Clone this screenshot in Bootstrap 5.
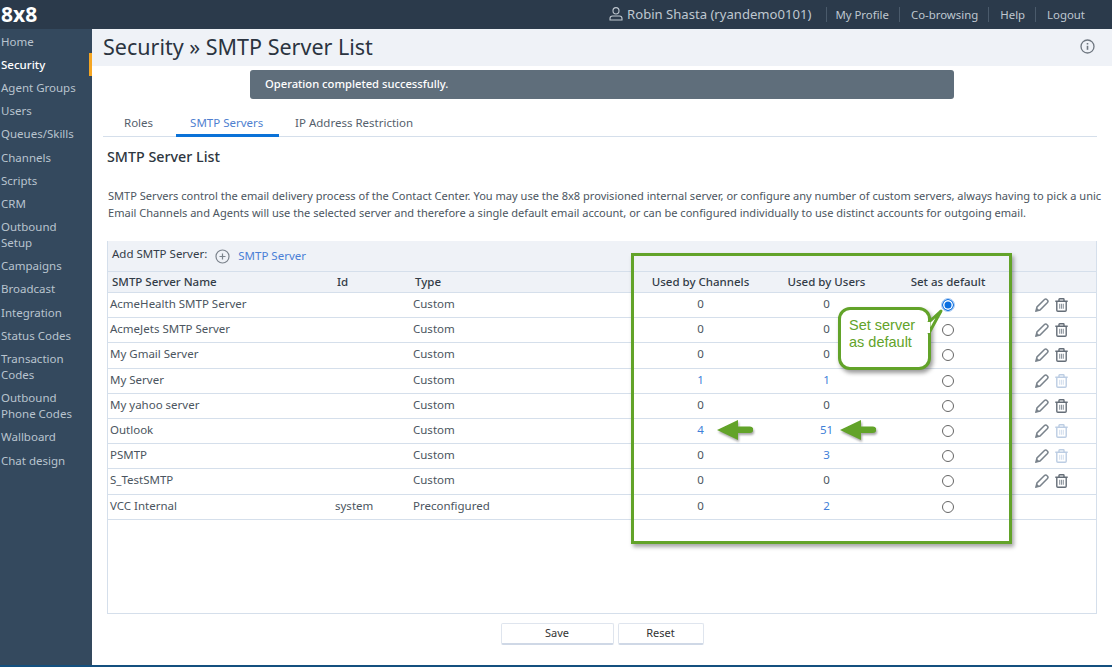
<!DOCTYPE html>
<html lang="en">
<head>
<meta charset="UTF-8" />
<title>SMTP Server List</title>
<link href="https://cdn.jsdelivr.net/npm/bootstrap@5.3.0/dist/css/bootstrap.min.css" rel="stylesheet" />
<style>
  html, body { height: 100%; overflow: hidden; }
  body { font-family: "Noto Sans", sans-serif; font-size: 11.5px; color: #44505c; background: #fff; }
  .top-bar { height: 29px; background: #2b3a4b; color: #c5ccd4; }
  .logo-text { font-weight: 700; font-size: 21px; color: #fff; line-height: 29px; padding-left: 1px; }
  .user-name { font-size: 13.1px; color: #bfc7d0; padding-right: 15px; }
  .top-link { font-size: 11.4px; color: #bfc7d0; text-decoration: none; border-left: 1px solid #4a5a6b; padding: 0 10px 0 11px; line-height: 15px; }
  .top-link.first-link { padding-left: 8px; }
  .top-links { padding-right: 17px; }
  .page-body { height: 636px; }
  .side-nav { width: 92px; background: #34495e; flex: none; padding-top: 1px; }
  .side-nav a { display: block; color: #b9c4cf; text-decoration: none; font-size: 11.5px; line-height: 16px; padding: 3.6px 0 3.6px 1px; border-right: 3px solid transparent; }
  .side-nav a.active-item { color: #fff; font-weight: 500; border-right-color: #f5a623; }
  .bottom-line { height: 2px; background: #14507f; }
  .main-pane { min-width: 0; position: relative; }
  .title-band { height: 37px; background: #eff2f7; padding: 0 17px 2px 11px; }
  .title-band h1 { font-size: 21.5px; font-weight: 400; color: #2b3440; margin: 0; }
  .msg-bar { width: 704px; height: 29px; margin: 4px 0 0 158px; background: #5f6e7b; border-radius: 3px; color: #fff; font-size: 11.2px; font-weight: 500; padding: 0 15px; line-height: 28px; }
  .tab-row { margin: 10px 15px 0 11px; height: 28px; border-bottom: 1px solid #d5dfeb; }
  .tab-row a { color: #55606c; text-decoration: none; font-size: 11.5px; line-height: 27px; padding: 0 14px 0 21px; height: 28px; }
  .tab-row a.tab-on { color: #4f7fd0; border-bottom: 3px solid #0a72d8; padding: 0 0 0 14px; margin-left: 9px; width: 103px; }
  .tab-row a.tab-last { padding-left: 16px; }
  .list-title { font-size: 14.3px; font-weight: 500; color: #2e3640; margin: 10px 0 0 15px; line-height: 20px; }
  .intro-text { margin: 20px 0 0 16px; line-height: 17px; white-space: nowrap; color: #4b5560; font-size: 11.05px; }
  .server-box { margin: 20px 15px 0 15px; height: 373px; border: 1px solid #d5dfeb; border-top: 0; }
  .add-row { height: 30px; background: #eff2f7; padding: 0 4px; color: #333c47; }
  .add-label { margin-right: 8px; padding-bottom: 4px; }
  .add-link { color: #4a7fd6; text-decoration: none; }
  .server-table { width: 100%; table-layout: fixed; border-collapse: collapse; margin: 0; }
  .server-table th { background: #eff2f7; height: 21px; font-weight: 500; color: #333c47; padding: 0 4px; border-top: 1px solid #d5dfeb; border-bottom: 1px solid #d5dfeb; font-size: 11.5px; }
  .server-table td { height: 25px; padding: 0 2px 2px; border-bottom: 1px solid #d5dfeb; color: #4b5560; font-size: 11.5px; vertical-align: middle; background: transparent; }
  .server-table tr:nth-child(3) td, .server-table tr:nth-child(8) td { height: 26px; padding-bottom: 3px; }
  .server-table .num-link { color: #3f7fd8; }
  .fake-radio { display: inline-block; width: 12px; height: 12px; border: 1px solid #666; border-radius: 50%; vertical-align: middle; }
  .fake-radio.radio-on { border: 1.5px solid #0a6ee0; box-shadow: inset 0 0 0 1.5px #fff; background: #0a6ee0; outline: 1px solid #a9cbf5; }
  .server-table td.row-icons { padding-left: 28px; white-space: nowrap; }
  .row-icons svg { vertical-align: middle; margin-right: 6px; }
  .form-btns { margin-top: 9px; }
  .plain-btn { width: 113px; height: 22px; padding: 0 0 2px; background: #fff; border: 1px solid #dfe5ee; border-bottom: 2px solid #cfd8e6; border-radius: 2px; font-size: 11px; color: #333; line-height: 16px; }
  .plain-btn.btn-short { width: 86px; }
  .green-frame { position: absolute; left: 539px; top: 224px; width: 381px; height: 291px; border: 3px solid #62a329; box-shadow: 2px 3px 4px rgba(0,0,0,.35); pointer-events: none; }
  .green-note { position: absolute; left: 746px; top: 278px; width: 93px; height: 63px; padding: 7px 8px; background: #fff; border: 3px solid #62a329; border-radius: 12px; color: #62a329; font-family: "Liberation Sans", sans-serif; font-size: 14.5px; line-height: 17px; box-shadow: 2px 3px 4px rgba(0,0,0,.4); }
  .note-tail { position: absolute; left: 834px; top: 279px; }
  .green-arrow { position: absolute; filter: drop-shadow(1px 2px 1px rgba(0,0,0,.35)); }
  .arrow-one { left: 625px; top: 390px; }
  .arrow-two { left: 748px; top: 390px; }
</style>
</head>
<body>
<div class="top-bar d-flex align-items-center">
  <div class="logo-text flex-grow-1">8x8</div>
  <div class="top-links d-flex align-items-center">
    <svg class="me-1" width="14" height="14" viewBox="0 0 14 14" fill="none" stroke="#bfc7d0" stroke-width="1.1"><ellipse cx="7" cy="3.800" rx="3" ry="3.200"/><path d="M1 13v-1.500c0-1.600 1-2.500 2.500-2.500h7c1.500 0 2.500.9 2.500 2.500V13z"/></svg>
    <span class="user-name">Robin Shasta (ryandemo0101)</span>
    <a class="top-link first-link" href="#">My Profile</a>
    <a class="top-link" href="#">Co-browsing</a>
    <a class="top-link" href="#">Help</a>
    <a class="top-link" href="#">Logout</a>
  </div>
</div>
<div class="page-body d-flex">
  <nav class="side-nav">
    <a href="#">Home</a>
    <a href="#" class="active-item">Security</a>
    <a href="#">Agent Groups</a>
    <a href="#">Users</a>
    <a href="#">Queues/Skills</a>
    <a href="#">Channels</a>
    <a href="#">Scripts</a>
    <a href="#">CRM</a>
    <a href="#">Outbound Setup</a>
    <a href="#">Campaigns</a>
    <a href="#">Broadcast</a>
    <a href="#">Integration</a>
    <a href="#">Status Codes</a>
    <a href="#">Transaction Codes</a>
    <a href="#">Outbound Phone Codes</a>
    <a href="#">Wallboard</a>
    <a href="#">Chat design</a>
  </nav>
  <main class="main-pane flex-grow-1">
    <div class="title-band d-flex align-items-center justify-content-between">
      <h1>Security » SMTP Server List</h1>
      <svg width="15" height="15" viewBox="0 0 15 15" fill="none" stroke="#6f7780" stroke-width="1.300"><circle cx="7.500" cy="7.500" r="6.500"/><path d="M7.500 6.800v4" stroke-width="1.600"/><path d="M7.500 4v1.500" stroke-width="1.600"/></svg>
    </div>
    <div class="msg-bar">Operation completed successfully.</div>
    <div class="tab-row d-flex">
      <a href="#">Roles</a>
      <a href="#" class="tab-on">SMTP Servers</a>
      <a href="#" class="tab-last">IP Address Restriction</a>
    </div>
    <div class="list-title">SMTP Server List</div>
    <p class="intro-text">SMTP Servers control the email delivery process of the Contact Center. You may use the 8x8 provisioned internal server, or configure any number of custom servers, always having to pick a unic<br>Email Channels and Agents will use the selected server and therefore a single default email account, or can be configured individually to use distinct accounts for outgoing email.</p>
    <div class="server-box">
      <div class="add-row d-flex align-items-center">
        <span class="add-label">Add SMTP Server:</span>
        <svg class="me-2" width="15" height="15" viewBox="0 0 15 15" fill="none" stroke="#7b838c" stroke-width="1.200"><circle cx="7.500" cy="7.500" r="6.500"/><path d="M7.500 4.500v6M4.500 7.500h6"/></svg>
        <a class="add-link" href="#">SMTP Server</a>
      </div>
      <table class="server-table">
        <colgroup>
          <col style="width:225px"><col style="width:78px"><col style="width:226px"><col style="width:127px"><col style="width:125px"><col style="width:118px"><col>
        </colgroup>
        <thead>
          <tr>
            <th>SMTP Server Name</th><th>Id</th><th>Type</th>
            <th class="text-center">Used by Channels</th><th class="text-center">Used by Users</th><th class="text-center">Set as default</th><th></th>
          </tr>
        </thead>
        <tbody id="server-rows"></tbody>
      </table>
    </div>
    <div class="form-btns d-flex justify-content-center gap-1">
      <button class="plain-btn" type="button">Save</button>
      <button class="plain-btn btn-short" type="button">Reset</button>
    </div>

    <div class="green-frame"></div>
    <div class="green-note">Set server as default</div>
    <svg class="note-tail" width="24" height="34" viewBox="0 0 24 34"><path d="M3 25 L15 3 L3 14 Z" fill="#fff" stroke="#62a329" stroke-width="3" stroke-linejoin="round"/><path d="M-2 14h6v11h-6z" fill="#fff"/></svg>
    <svg class="green-arrow arrow-one" width="36" height="22" viewBox="0 0 36 22"><path d="M0 11 L21 1 V7.500 H33 a3 3 0 0 1 0 6.500 H21 V21 Z" fill="#62a329"/></svg>
    <svg class="green-arrow arrow-two" width="36" height="22" viewBox="0 0 36 22"><path d="M0 11 L21 1 V7.500 H33 a3 3 0 0 1 0 6.500 H21 V21 Z" fill="#62a329"/></svg>
  </main>
</div>
<div class="bottom-line"></div>

<script src="https://cdn.jsdelivr.net/npm/bootstrap@5.3.0/dist/js/bootstrap.bundle.min.js"></script>
<script>
  // name, id, type, channels, users, default, trash enabled
  const servers = [
    ["AcmeHealth SMTP Server", "", "Custom", 0, 0, true, true],
    ["AcmeJets SMTP Server", "", "Custom", 0, 0, false, true],
    ["My Gmail Server", "", "Custom", 0, 0, false, true],
    ["My Server", "", "Custom", 1, 1, false, false],
    ["My yahoo server", "", "Custom", 0, 0, false, true],
    ["Outlook", "", "Custom", 4, 51, false, false],
    ["PSMTP", "", "Custom", 0, 3, false, false],
    ["S_TestSMTP", "", "Custom", 0, 0, false, true],
    ["VCC Internal", "system", "Preconfigured", 0, 2, false, null]
  ];
  const pencil = '<svg width="14" height="14" viewBox="0 0 14 14"><path d="M1 13l1-4 7.500-7.500c.7-.7 1.700-.7 2.300 0l.7.7c.6.6.6 1.600 0 2.300L5 12z" fill="none" stroke="#7a838c" stroke-width="1.500"/><path d="M1.500 9.500l3 3L.6 13.400z" fill="#7a838c"/></svg>';
  const trash = (on) => {
    const c = on ? "#646d77" : "#bccde3";
    const b = on ? "#8d959e" : "#d5e0ee";
    return `<svg width="13" height="14" viewBox="0 0 13 14" fill="none" stroke="${c}" stroke-width="1.400"><path d="M.3 3.200h12.400M4 3V1.400c0-.4.300-.7.700-.7h3.600c.4 0 .7.300.7.700V3"/><path d="M1.800 3.500v8.700c0 .7.500 1.100 1.100 1.100h7.200c.6 0 1.100-.4 1.100-1.100V3.500"/><path stroke="${b}" stroke-width="1.100" d="M4.700 5.800v5M6.500 5.800v5M8.300 5.800v5"/></svg>`;
  };
  const num = (n) => n > 0 ? `<span class="num-link">${n}</span>` : n;
  document.getElementById("server-rows").innerHTML = servers.map((s) => `
    <tr>
      <td>${s[0]}</td><td>${s[1]}</td><td>${s[2]}</td>
      <td class="text-center">${num(s[3])}</td>
      <td class="text-center">${num(s[4])}</td>
      <td class="text-center"><span class="fake-radio ${s[5] ? "radio-on" : ""}"></span></td>
      <td class="row-icons">${s[6] === null ? "" : pencil + trash(s[6])}</td>
    </tr>`).join("");
</script>
</body>
</html>
